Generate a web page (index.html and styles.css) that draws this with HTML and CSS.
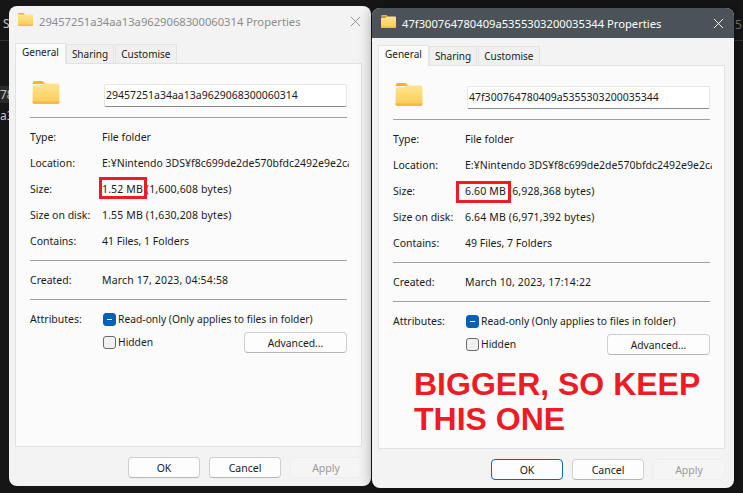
FILE: index.html
```html
<!DOCTYPE html>
<html lang="en">
<head>
<meta charset="utf-8">
<title>Folder properties comparison</title>
<link rel="stylesheet" href="styles.css">
</head>
<body>
<svg class="defs" width="0" height="0" aria-hidden="true">
  <defs>
    <linearGradient id="fg" x1="0" y1="0" x2="0" y2="1">
      <stop offset="0" stop-color="#ffe58f"/>
      <stop offset="1" stop-color="#fcca55"/>
    </linearGradient>
    <symbol id="folder" viewBox="0 0 28 24">
      <path d="M0 3C0 1.500 .8 0 2.500 0h7c.8 0 1.300.3 1.900.9L13.500 3H0z" fill="#f9b61c"/>
      <path d="M0 6C0 5 .8 4.500 2 4.500l6.500 0 3-1.800H26c1.200 0 2 .9 2 2V22c0 1.200-.8 2-2 2H2c-1.200 0-2-.8-2-2z" fill="url(#fg)"/>
      <path d="M0 22c0 1.200.8 2 2 2h24c1.200 0 2-.8 2-2v-.8H0z" fill="#f5bb3c"/>
    </symbol>
  </defs>
</svg>

<div class="backdrop">
  <span class="stray stray-s">S</span>
  <span class="stray stray-78">78</span>
  <span class="stray stray-a3">a3</span>
  <span class="stray stray-57">5</span>
  <span class="rule"></span>
</div>

<section class="win win-a">
  <header class="titlebar">
    <svg class="title-icon"><use href="#folder"/></svg>
    <span class="title-text">29457251a34aa13a9629068300060314 Properties</span>
    <svg class="close" viewBox="0 0 12 12"><path d="M1 1l10 10M11 1L1 11"/></svg>
  </header>
  <nav class="tabs">
    <span class="tab active">General</span><span class="tab">Sharing</span><span class="tab">Customise</span>
  </nav>
  <div class="panel">
    <div class="head">
      <svg class="big-icon"><use href="#folder"/></svg>
      <div class="name">29457251a34aa13a9629068300060314</div>
    </div>
    <hr class="sep first">
    <dl class="rows">
      <dt>Type:</dt><dd>File folder</dd>
      <dt>Location:</dt><dd class="clip">E:¥Nintendo 3DS¥f8c699de2de570bfdc2492e9e2ca</dd>
      <dt>Size:</dt><dd class="num">1.52 MB (1,600,608 bytes)</dd>
      <dt>Size on disk:</dt><dd class="num">1.55 MB (1,630,208 bytes)</dd>
      <dt>Contains:</dt><dd>41 Files, 1 Folders</dd>
    </dl>
    <hr class="sep">
    <dl class="rows single">
      <dt>Created:</dt><dd class="num">March 17, 2023, 04:54:58</dd>
    </dl>
    <hr class="sep">
    <div class="attrs">
      <span class="attr-label">Attributes:</span>
      <div class="attr-body">
        <div class="check-row"><span class="check on"></span>Read-only (Only applies to files in folder)</div>
        <div class="check-row second"><span class="check"></span>Hidden<button class="btn advanced">Advanced...</button></div>
      </div>
    </div>
  </div>
  <footer class="actions">
    <button class="btn">OK</button>
    <button class="btn">Cancel</button>
    <button class="btn disabled">Apply</button>
  </footer>
</section>

<section class="win win-b">
  <header class="titlebar dark">
    <svg class="title-icon"><use href="#folder"/></svg>
    <span class="title-text">47f300764780409a5355303200035344 Properties</span>
    <svg class="close" viewBox="0 0 12 12"><path d="M1 1l10 10M11 1L1 11"/></svg>
  </header>
  <nav class="tabs">
    <span class="tab active">General</span><span class="tab">Sharing</span><span class="tab">Customise</span>
  </nav>
  <div class="panel">
    <div class="head">
      <svg class="big-icon"><use href="#folder"/></svg>
      <div class="name">47f300764780409a5355303200035344</div>
    </div>
    <hr class="sep first">
    <dl class="rows">
      <dt>Type:</dt><dd>File folder</dd>
      <dt>Location:</dt><dd class="clip">E:¥Nintendo 3DS¥f8c699de2de570bfdc2492e9e2ca</dd>
      <dt>Size:</dt><dd class="num">6.60 MB (6,928,368 bytes)</dd>
      <dt>Size on disk:</dt><dd class="num">6.64 MB (6,971,392 bytes)</dd>
      <dt>Contains:</dt><dd>49 Files, 7 Folders</dd>
    </dl>
    <hr class="sep">
    <dl class="rows single">
      <dt>Created:</dt><dd class="num">March 10, 2023, 17:14:22</dd>
    </dl>
    <hr class="sep">
    <div class="attrs">
      <span class="attr-label">Attributes:</span>
      <div class="attr-body">
        <div class="check-row"><span class="check on"></span>Read-only (Only applies to files in folder)</div>
        <div class="check-row second"><span class="check"></span>Hidden<button class="btn advanced">Advanced...</button></div>
      </div>
    </div>
  </div>
  <footer class="actions">
    <button class="btn default">OK</button>
    <button class="btn">Cancel</button>
    <button class="btn disabled">Apply</button>
  </footer>
</section>

<div class="mark mark-a"></div>
<div class="mark mark-b"></div>
<p class="note">BIGGER, SO KEEP<br>THIS ONE</p>
</body>
</html>
```

FILE: styles.css
```css
* { box-sizing: border-box; }

html, body {
  margin: 0;
  height: 100%;
}

body {
  position: relative;
  width: 743px;
  height: 493px;
  overflow: hidden;
  background: #161616;
  font-family: "Noto Sans", "Liberation Sans", sans-serif;
  font-size: 10.5px;
  color: #1a1a1a;
}

.defs { position: absolute; }

.backdrop { position: absolute; inset: 0; color: #c8c8c8; font-size: 12px; }
.stray { position: absolute; }
.stray-s { left: 3px; top: 15px; }
.stray-78 { left: 0; top: 86px; background: #2a2a2a; padding-right: 8px; }
.stray-a3 { left: 0; top: 107px; }
.stray-57 { left: 735px; top: 16px; color: #777; }
.rule { position: absolute; left: 0; right: 0; top: 40px; height: 1px; background: #343434; }

.win {
  position: absolute;
  width: 362px;
  height: 480px;
  background: #f3f3f3;
  border-radius: 8px;
  display: flex;
  flex-direction: column;
  overflow: hidden;
}
.win-a { left: 9px; top: 6px; }
.win-b { left: 372px; top: 8px; box-shadow: 0 0 14px rgba(0, 0, 0, .35); }

.titlebar {
  display: flex;
  align-items: center;
  height: 30px;
  padding: 0 9px;
  flex: none;
  color: #8b8b8b;
  font-size: 11.2px;
}
.titlebar.dark { background: #4b5358; color: #fff; }

.title-icon { width: 15px; height: 13px; flex: none; margin-right: 6px; margin-top: -3px; }
.title-text { flex: 1; white-space: nowrap; }

.close {
  width: 11px;
  height: 11px;
  fill: none;
  stroke: #8b8b8b;
  stroke-width: 1;
  margin-right: 1px;
}
.dark .close { stroke: #fff; }

.tabs {
  display: flex;
  align-items: flex-end;
  height: 27px;
  padding: 0 6px;
  flex: none;
  position: relative;
  z-index: 1;
  font-size: 10px;
}
.tab {
  height: 19px;
  padding: 0 5px;
  line-height: 18px;
  background: #f0f0f0;
  border: 1px solid #e4e4e4;
  border-bottom: 0;
  margin-right: 1px;
}
.tab.active {
  height: 21px;
  padding: 0 6px;
  margin-right: 0;
  background: #fbfbfb;
  margin-bottom: -1px;
  line-height: 17px;
}

.panel {
  margin: 0 9px 0 6px;
  height: 384px;
  flex: none;
  padding: 0 14px;
  background: #fbfbfb;
  border: 1px solid #e2e2e2;
}

.head {
  display: flex;
  align-items: flex-start;
  padding-top: 17px;
  height: 53px;
}
.big-icon { width: 28px; height: 23px; flex: none; margin: 0 44px 0 2px; }
.name {
  width: 245px;
  height: 23px;
  margin-top: 3px;
  padding: 0 1px;
  line-height: 20px;
  background: #fff;
  border: 1px solid #e6e6e6;
  border-bottom: 1px solid #8a8a8a;
  border-radius: 2px;
  white-space: nowrap;
}

.sep {
  height: 1px;
  margin: 0;
  width: 317px;
  border: 0;
  background: #a0a0a0;
}

.rows {
  display: grid;
  grid-template-columns: 72px 1fr;
  grid-auto-rows: 26px;
  margin: 6px 0;
  align-items: center;
}
.rows dt, .rows dd { margin: 0; white-space: nowrap; }
.rows dd { width: 247px; overflow: hidden; }
.rows dd.num { letter-spacing: .15px; }

.attrs {
  display: grid;
  grid-template-columns: 72px 1fr;
  margin-top: 11px;
}
.attr-label { line-height: 16px; }
.attr-body { width: 245px; padding-left: 1px; font-size: 10.3px; }

.check-row {
  display: flex;
  align-items: center;
  height: 16px;
  white-space: nowrap;
}
.check-row.second { margin-top: 7px; position: relative; }

.check {
  width: 13px;
  height: 13px;
  flex: none;
  margin-right: 2px;
  background: #f1f1f1;
  border: 1px solid #6a6a6a;
  border-radius: 3px;
  position: relative;
}
.check.on { background: #0561b8; border-color: #0561b8; }
.check.on::after {
  content: "";
  position: absolute;
  left: 3px;
  top: 5px;
  width: 5px;
  height: 1px;
  background: #fff;
}

.btn {
  width: 72px;
  height: 21px;
  padding: 0;
  font: inherit;
  color: #1a1a1a;
  background: #fdfdfd;
  border: 1px solid #cfcfcf;
  border-bottom-color: #b5b5b5;
  border-radius: 4px;
}
.btn.advanced {
  position: absolute;
  right: 0;
  top: -2px;
  width: 103px;
}
.btn.default { border-color: #0567c0; }
.btn.disabled {
  background: #f5f5f5;
  border-color: #efefef;
  color: #9a9a9a;
}

.actions {
  display: flex;
  justify-content: flex-end;
  gap: 9px;
  padding: 10px 9px 0 0;
}

.mark {
  position: absolute;
  border: 3px solid #ed1c24;
}
.mark-a { left: 99px; top: 177px; width: 48px; height: 22px; }
.mark-b { left: 456px; top: 181px; width: 55px; height: 22px; }

.note {
  position: absolute;
  left: 414px;
  top: 367px;
  margin: 0;
  font-family: "Liberation Sans", Arial, sans-serif;
  font-weight: 700;
  font-size: 32px;
  line-height: 35px;
  color: #ed1c24;
  white-space: nowrap;
}
```
